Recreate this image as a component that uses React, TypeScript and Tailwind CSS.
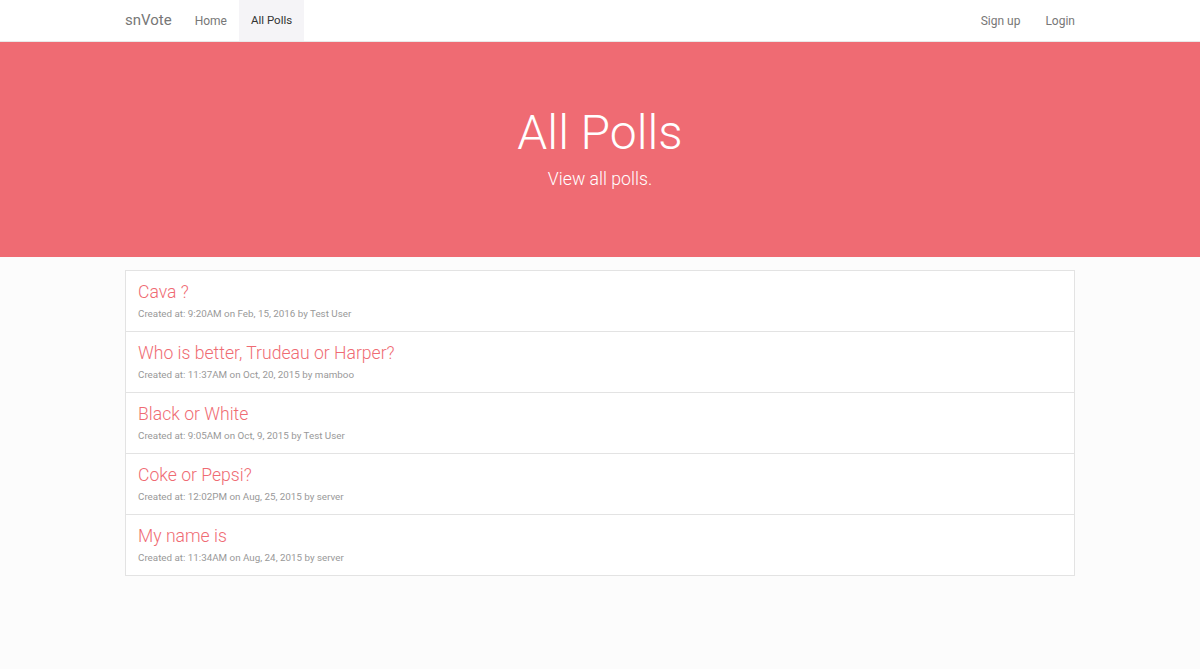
import React from "react";

const polls = [
  { title: "Cava ?", meta: "Created at: 9:20AM on Feb, 15, 2016 by Test User" },
  { title: "Who is better, Trudeau or Harper?", meta: "Created at: 11:37AM on Oct, 20, 2015 by mamboo" },
  { title: "Black or White", meta: "Created at: 9:05AM on Oct, 9, 2015 by Test User" },
  { title: "Coke or Pepsi?", meta: "Created at: 12:02PM on Aug, 25, 2015 by server" },
  { title: "My name is", meta: "Created at: 11:34AM on Aug, 24, 2015 by server" },
];

export default function App() {
  return (
    <div
      className="min-h-[669px] bg-[#fcfcfc]"
      style={{ fontFamily: "Roboto, 'Noto Sans', sans-serif" }}
    >
      <nav className="h-[42px] bg-white border-b border-[#e8e8e8]">
        <div className="mx-auto w-[950px] h-full flex items-center justify-between">
          <div className="flex items-center h-full">
            <span className="text-[15px] text-[#777] pr-[11px]">snVote</span>
            <span className="text-[12px] text-[#777] px-[12px] h-full flex items-center">Home</span>
            <span className="text-[11.5px] text-[#333] px-[12px] h-full flex items-center bg-[#f5f4f7]">All Polls</span>
          </div>
          <div className="flex items-center h-full">
            <span className="text-[12px] text-[#777] pr-[25px]">Sign up</span>
            <span className="text-[12px] text-[#777]">Login</span>
          </div>
        </div>
      </nav>
      <header className="h-[215px] bg-[#ef6b73] flex flex-col items-center pt-[63px]">
        <h1 className="text-[48px] font-light text-white leading-[56px]">All Polls</h1>
        <p className="text-[17.7px] font-light text-white mt-[5px]">View all polls.</p>
      </header>
      <div className="mx-auto w-[950px] mt-[13px] border border-[#e3e3e3] bg-white">
        {polls.map((p, i) => (
          <div
            key={i}
            className={`box-content h-[50px] px-[12px] pt-[10px] ${i > 0 ? "border-t border-[#e3e3e3]" : ""}`}
          >
            <div className="text-[17.6px] font-light text-[#ef6b73] leading-[22px]">{p.title}</div>
            <div className="text-[9.8px] text-[#999] mt-[4px] leading-[14px]">{p.meta}</div>
          </div>
        ))}
      </div>
    </div>
  );
}
